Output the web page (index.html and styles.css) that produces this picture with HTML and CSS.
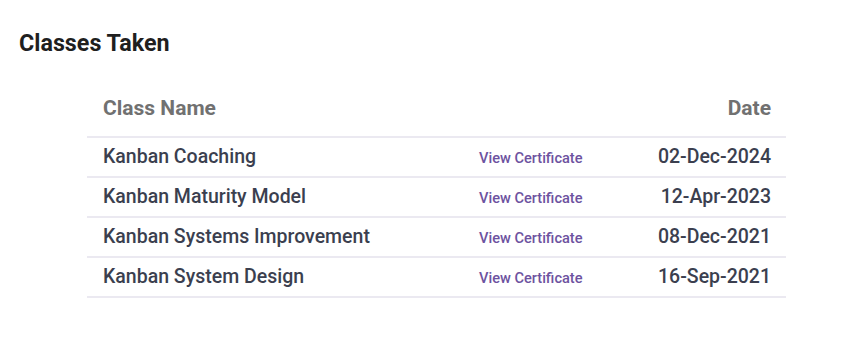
FILE: index.html
```html
<!DOCTYPE html>
<html lang="en">
<head>
<meta charset="utf-8">
<title>Classes Taken</title>
<link rel="stylesheet" href="styles.css">
</head>
<body>
<section class="classes">
  <h2 class="classes__title">Classes Taken</h2>
  <div class="table">
    <div class="row row--head">
      <div class="cell cell--name">Class Name</div>
      <div class="cell cell--link"></div>
      <div class="cell cell--date">Date</div>
    </div>
    <div class="row">
      <div class="cell cell--name">Kanban Coaching</div>
      <div class="cell cell--link"><a href="#">View Certificate</a></div>
      <div class="cell cell--date">02-Dec-2024</div>
    </div>
    <div class="row">
      <div class="cell cell--name">Kanban Maturity Model</div>
      <div class="cell cell--link"><a href="#">View Certificate</a></div>
      <div class="cell cell--date">12-Apr-2023</div>
    </div>
    <div class="row">
      <div class="cell cell--name">Kanban Systems Improvement</div>
      <div class="cell cell--link"><a href="#">View Certificate</a></div>
      <div class="cell cell--date">08-Dec-2021</div>
    </div>
    <div class="row">
      <div class="cell cell--name">Kanban System Design</div>
      <div class="cell cell--link"><a href="#">View Certificate</a></div>
      <div class="cell cell--date">16-Sep-2021</div>
    </div>
  </div>
</section>
</body>
</html>
```

FILE: styles.css
```css
html, body {
  margin: 0;
  padding: 0;
  background: #ffffff;
}

body {
  font-family: Roboto, "Liberation Sans", sans-serif;
}

.classes {
  padding: 29px 19px 0 19px;
}

.classes__title {
  margin: 0;
  font-size: 23.3px;
  line-height: 28px;
  font-weight: 700;
  color: #1f1f1f;
}

.table {
  margin: 29px 0 0 68px;
  width: 699px;
}

.row {
  display: grid;
  grid-template-columns: 392px 1fr auto;
  align-items: center;
  height: 38px;
  border-bottom: 2px solid #ebe9f1;
}

.row--head {
  height: 40px;
  padding-top: 10px;
  align-items: start;
}

.cell--name {
  padding-left: 16px;
}

.cell--date {
  padding-right: 15px;
  text-align: right;
}

.row .cell--name,
.row .cell--date {
  font-size: 19.5px;
  line-height: 24px;
  font-weight: 500;
  color: #3b3f4f;
}

.row--head .cell--name,
.row--head .cell--date {
  font-size: 21px;
  line-height: 24px;
  font-weight: 700;
  color: #717171;
}

.cell--link a {
  font-size: 14.6px;
  font-weight: 500;
  color: #6d52a0;
  text-decoration: none;
}
```
